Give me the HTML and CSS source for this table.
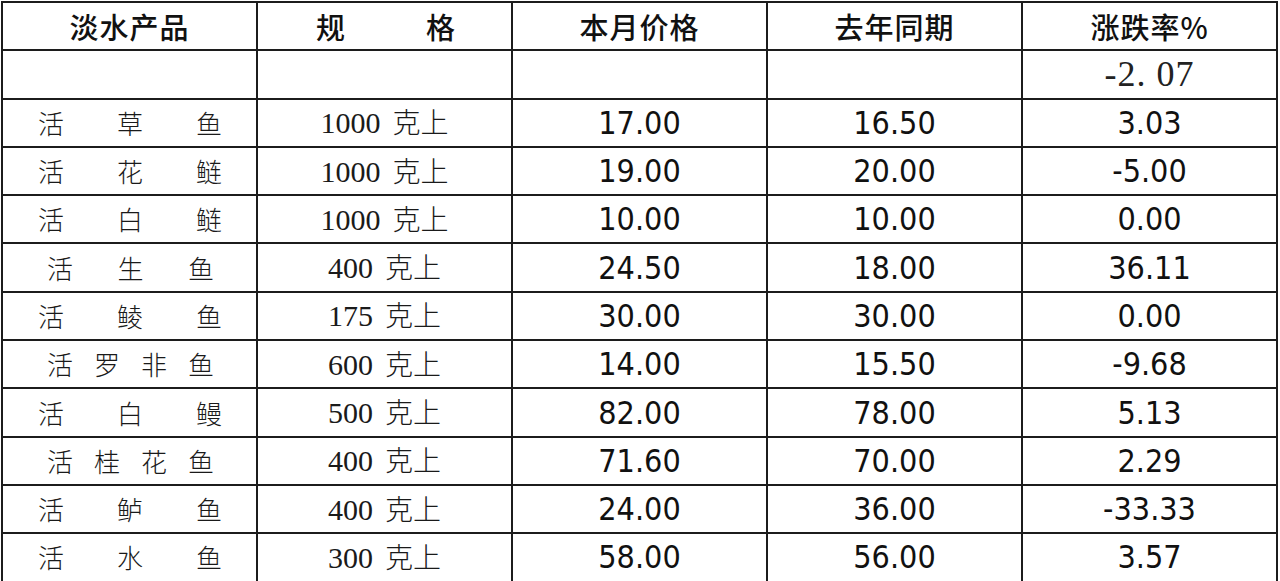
FILE: index.html
```html
<!DOCTYPE html>
<html lang="zh">
<head>
<meta charset="utf-8">
<link rel="stylesheet" href="styles.css">
</head>
<body>
<table class="price-table">
  <colgroup>
    <col class="c"><col class="c"><col class="c"><col class="c"><col class="c">
  </colgroup>
  <thead>
    <tr>
      <th><span class="hd">淡水产品</span></th>
      <th><div class="spread spread-hd"><span>规</span><span>格</span></div></th>
      <th><span class="hd">本月价格</span></th>
      <th><span class="hd">去年同期</span></th>
      <th><span class="hd">涨跌率%</span></th>
    </tr>
  </thead>
  <tbody>
    <tr>
      <td></td><td></td><td></td><td></td>
      <td class="total">-2. 07</td>
    </tr>
    <tr><td><div class="spread"><span>活</span><span>草</span><span>鱼</span></div></td><td class="spec">1000<span class="cjk">克上</span></td><td class="num">17.00</td><td class="num">16.50</td><td class="num">3.03</td></tr>
    <tr><td><div class="spread"><span>活</span><span>花</span><span>鲢</span></div></td><td class="spec">1000<span class="cjk">克上</span></td><td class="num">19.00</td><td class="num">20.00</td><td class="num">-5.00</td></tr>
    <tr><td><div class="spread"><span>活</span><span>白</span><span>鲢</span></div></td><td class="spec">1000<span class="cjk">克上</span></td><td class="num">10.00</td><td class="num">10.00</td><td class="num">0.00</td></tr>
    <tr><td><div class="spread spread-in"><span>活</span><span>生</span><span>鱼</span></div></td><td class="spec">400<span class="cjk">克上</span></td><td class="num">24.50</td><td class="num">18.00</td><td class="num">36.11</td></tr>
    <tr><td><div class="spread"><span>活</span><span>鲮</span><span>鱼</span></div></td><td class="spec">175<span class="cjk">克上</span></td><td class="num">30.00</td><td class="num">30.00</td><td class="num">0.00</td></tr>
    <tr><td><div class="spread spread-in"><span>活</span><span>罗</span><span>非</span><span>鱼</span></div></td><td class="spec">600<span class="cjk">克上</span></td><td class="num">14.00</td><td class="num">15.50</td><td class="num">-9.68</td></tr>
    <tr><td><div class="spread"><span>活</span><span>白</span><span>鳗</span></div></td><td class="spec">500<span class="cjk">克上</span></td><td class="num">82.00</td><td class="num">78.00</td><td class="num">5.13</td></tr>
    <tr><td><div class="spread spread-in"><span>活</span><span>桂</span><span>花</span><span>鱼</span></div></td><td class="spec">400<span class="cjk">克上</span></td><td class="num">71.60</td><td class="num">70.00</td><td class="num">2.29</td></tr>
    <tr><td><div class="spread"><span>活</span><span>鲈</span><span>鱼</span></div></td><td class="spec">400<span class="cjk">克上</span></td><td class="num">24.00</td><td class="num">36.00</td><td class="num">-33.33</td></tr>
    <tr><td><div class="spread"><span>活</span><span>水</span><span>鱼</span></div></td><td class="spec">300<span class="cjk">克上</span></td><td class="num">58.00</td><td class="num">56.00</td><td class="num">3.57</td></tr>
  </tbody>
</table>
</body>
</html>
```

FILE: styles.css
```css
html, body {
  margin: 0;
  padding: 0;
  background: #ffffff;
}

body {
  padding: 1px 0 0 1px;
  color: #111;
  font-family: "Noto Sans CJK SC", sans-serif;
}

.price-table {
  border-collapse: collapse;
  table-layout: fixed;
  width: 1277px;
}

.price-table .c {
  width: 255px;
}

.price-table th,
.price-table td {
  border: 2px solid #1c1c1c;
  padding: 0;
  height: 46px;
  text-align: center;
  vertical-align: middle;
  line-height: 1;
  overflow: hidden;
  white-space: nowrap;
}

.price-table tr {
  height: 48.3px;
}

.hd {
  font-family: "Noto Sans CJK SC", sans-serif;
  font-weight: 500;
  font-size: 29px;
  letter-spacing: 1px;
}

.spread {
  display: flex;
  justify-content: space-between;
  padding: 0 34px 0 35px;
  font-family: "Noto Sans CJK SC", sans-serif;
  font-weight: 300;
  font-size: 26px;
  color: #1a1a1a;
}

.spread-in {
  padding: 0 42px 0 44px;
}

.spread-hd {
  padding: 0 56px 0 58px;
  font-weight: 500;
  font-size: 29px;
  color: #111;
}

.spec {
  font-family: "Liberation Serif", "Noto Sans CJK SC", serif;
  font-size: 30px;
  color: #1a1a1a;
}

.spec .cjk {
  font-family: "Noto Sans CJK SC", sans-serif;
  font-weight: 300;
  font-size: 28px;
  margin-left: 12px;
}

.num {
  font-family: "DejaVu Sans Condensed", "DejaVu Sans", sans-serif;
  font-stretch: condensed;
  font-size: 32px;
  color: #111;
  padding-top: 2px;
}

.total {
  font-family: "Liberation Serif", serif;
  font-size: 36px;
  letter-spacing: 1px;
  color: #222;
  padding-top: 2px;
}
```
